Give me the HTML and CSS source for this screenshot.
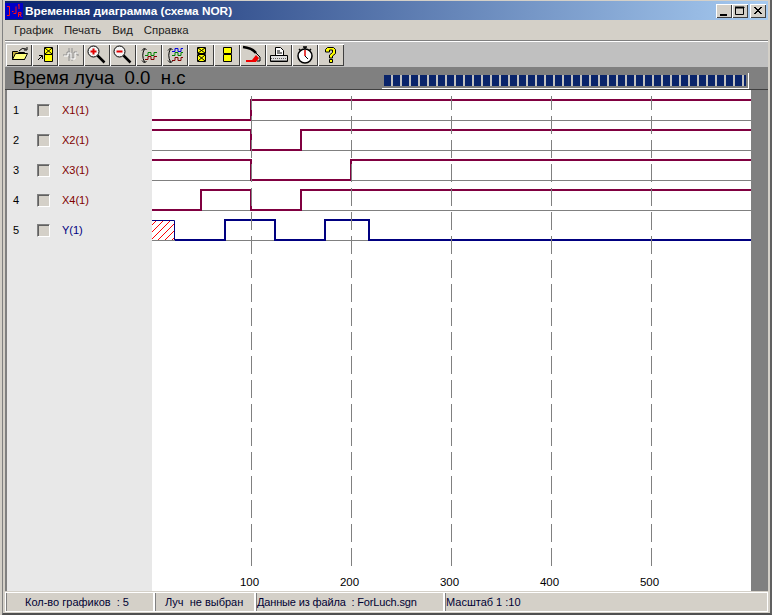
FILE: index.html
```html
<!DOCTYPE html>
<html lang="ru">
<head>
  <meta charset="UTF-8" />
  <title>Временная диаграмма (схема NOR)</title>
  <link rel="stylesheet" href="styles.css">
</head>
<body>
  <div class="window">
    <div class="titlebar">
      <svg class="app-icon" width="18" height="16" viewBox="0 0 18 16">
        <rect width="18" height="16" fill="#0000c8"/>
        <path d="M2 3.5h2.5v9H2M7 8.5h1.5M11 3.5v7H8.5M14 1v5M13 2h1M13.5 14v-4.5h2.5v2h-2.5M15 12l1.5 2" fill="none" stroke="#ff1010" stroke-width="1"/>
      </svg>
      <span class="title-text">Временная диаграмма (схема NOR)</span>
      <div class="win-buttons">
        <button class="win-btn"><svg width="16" height="14" viewBox="0 0 16 14"><path d="M4 11h7" stroke="#000" stroke-width="2"/></svg></button>
        <button class="win-btn"><svg width="16" height="14" viewBox="0 0 16 14"><path d="M3.5 3.5h8v7h-8zM3 3h9v1H3" fill="none" stroke="#000"/></svg></button>
        <button class="win-btn win-close"><svg width="16" height="14" viewBox="0 0 16 14"><path d="M4 3l7 7M5 3l7 7M11 3l-7 7M12 3l-7 7" stroke="#000"/></svg></button>
      </div>
    </div>

    <div class="menubar">
      <span>График</span>
      <span>Печать</span>
      <span>Вид</span>
      <span>Справка</span>
    </div>

    <div class="toolbar">
      <button class="tool"><svg width="20" height="20" viewBox="0 0 20 20"><path d="M3.5 6.5h5l1 1h6v7h-12z" fill="#c8b040" stroke="#000"/><path d="M3.5 14.5l3-6h12l-3 6z" fill="#ffff80" stroke="#000"/><path d="M10 6q3-4 7-2M18 2v3h-3" fill="none" stroke="#000"/></svg></button>
      <button class="tool"><svg width="20" height="20" viewBox="0 0 20 20"><path d="M9.5 2.5h8v7h-8z" fill="#ffff00" stroke="#000"/><path d="M10 3l7 6M17 3l-7 6" stroke="#000"/><path d="M9.5 9.5h8v7h-8z" fill="#ffff00" stroke="#000"/><path d="M3 15l4-4M4 10.5h3.5V14" fill="none" stroke="#000"/></svg></button>
      <button class="tool"><svg width="20" height="20" viewBox="0 0 20 20"><path d="M2 10h4V7h3v6h4V7h3v3h2M8 3v13M11 3v13" fill="none" stroke="#909090"/><path d="M3 11h4V8h3v6h4V8h3" fill="none" stroke="#fff"/></svg></button>
      <button class="tool"><svg width="20" height="20" viewBox="0 0 20 20"><circle cx="6.5" cy="6.5" r="5.5" fill="#f4f4f4" stroke="#000"/><path d="M3.5 6.5h6M6.5 3.5v6" stroke="#e00000" stroke-width="2"/><path d="M10.5 10.5l7 7" stroke="#000" stroke-width="2.5"/></svg></button>
      <button class="tool"><svg width="20" height="20" viewBox="0 0 20 20"><circle cx="6.5" cy="6.5" r="5.5" fill="#f4f4f4" stroke="#000"/><path d="M3.5 6.5h6" stroke="#e00000" stroke-width="2"/><path d="M10.5 10.5l7 7" stroke="#000" stroke-width="2.5"/></svg></button>
      <button class="tool"><svg width="20" height="20" viewBox="0 0 20 20"><path d="M6 10.5h3v-3h3v3h3v-3h3" fill="none" stroke="#008000"/><path d="M6 14.5h3v-3h3v3h3v-3h3" fill="none" stroke="#800000"/><path d="M5.5 4Q2 10 5.5 17M3 5.5L5.5 3l2 2M3 15.5L5.5 18l2-2" fill="none" stroke="#000"/></svg></button>
      <button class="tool"><svg width="20" height="20" viewBox="0 0 20 20"><path d="M7 6.5h3v-3h3v3h3v-3h2" fill="none" stroke="#0000e0"/><path d="M7 10.5h3v-3h3v3h3v-3h2" fill="none" stroke="#008000"/><path d="M7 15.5h3v-3h3v3h3v-3h2" fill="none" stroke="#800000"/><path d="M5.5 4Q2 10 5.5 17M3 5.5L5.5 3l2 2M3 15.5L5.5 18l2-2" fill="none" stroke="#000"/></svg></button>
      <button class="tool"><svg width="20" height="20" viewBox="0 0 20 20"><path d="M6.5 2.5h8v6h-8zM6.5 9.5h8v7h-8z" fill="#ffff00" stroke="#000"/><path d="M7 3l7 5M14 3l-7 5M7 10l7 6M14 10l-7 6" stroke="#000"/></svg></button>
      <button class="tool"><svg width="20" height="20" viewBox="0 0 20 20"><path d="M6.5 2.5h8v6h-8zM6.5 9.5h8v7h-8z" fill="#ffff00" stroke="#000"/></svg></button>
      <button class="tool"><svg width="22" height="20" viewBox="0 0 22 20"><path d="M1 2q9 1 13 6" fill="none" stroke="#000" stroke-width="2.5"/><path d="M14 8l4 4v4h-3" fill="none" stroke="#000"/><path d="M14 10l3 3-3 4H4v-2h6z" fill="#f00000"/></svg></button>
      <button class="tool"><svg width="20" height="20" viewBox="0 0 20 20"><path d="M6.5 2.5h5l3 3v5h-8z" fill="#fff" stroke="#000"/><path d="M8 6h3M8 8h5" stroke="#000"/><path d="M1.5 10.5h17v6h-17z" fill="#e0e0e0" stroke="#000"/><path d="M2 13.5h16" stroke="#606060" stroke-dasharray="1 1"/><path d="M2 15.5h16" stroke="#808080"/></svg></button>
      <button class="tool"><svg width="20" height="20" viewBox="0 0 20 20"><circle cx="10" cy="11" r="7" fill="#fff" stroke="#000" stroke-width="1.5"/><path d="M8 2h4M10 2v2M4 4l2 2M16 4l-2 2" stroke="#000" stroke-width="1.5"/><path d="M10 5v6" stroke="#e00000" stroke-width="1.5"/><path d="M10 11l3 3" stroke="#000"/></svg></button>
      <button class="tool"><svg width="20" height="20" viewBox="0 0 20 20"><path d="M4.5 7V4.5l2-2h6l2 2v4l-3 2.5v2h-3v-3l3-2.5V5h-3v2z" fill="#ffff00" stroke="#000"/><path d="M8.5 14.5h3v3h-3z" fill="#ffff00" stroke="#000"/></svg></button>
    </div>

    <div class="time-bar">
      <span class="time-label">Время луча&nbsp; 0.0&nbsp; н.с</span>
      <div class="progress"></div>
    </div>

    <div class="chart-area">
      <ul class="signals">
        <li class="signal"><span class="num">1</span><span class="check"></span><span class="name">X1(1)</span></li>
        <li class="signal"><span class="num">2</span><span class="check"></span><span class="name">X2(1)</span></li>
        <li class="signal"><span class="num">3</span><span class="check"></span><span class="name">X3(1)</span></li>
        <li class="signal"><span class="num">4</span><span class="check"></span><span class="name">X4(1)</span></li>
        <li class="signal output"><span class="num">5</span><span class="check"></span><span class="name">Y(1)</span></li>
      </ul>

      <svg class="plot" width="599" height="501" viewBox="152 90 599 501">
        <path class="base" d="M152 120.5H751M152 150.5H751M152 180.5H751M152 210.5H751M152 240.5H751"/>
        <path class="wave" d="M152 120H251V100H751"/>
        <path class="wave" d="M152 130H251V150H301V130H751"/>
        <path class="wave" d="M152 160H251V180H351V160H751"/>
        <path class="wave" d="M152 210H201V190H251V210H301V190H751"/>
        <path class="hatch" d="M152 225L156 221M152 232L163 221M152 239L170 221M158 240L174 224M165 240L174 231M172 240L174 238"/>
        <path class="hatch-edge" d="M152 220.5H174.5V240"/>
        <path class="wave wave-out" d="M175 240H225V220H275V240H325V220H369V240H751"/>
        <path class="grid" d="M251.5 96V566M351.5 96V566M451.5 96V566M551.5 96V566M651.5 96V566"/>
        <text x="249.5" y="586">100</text>
        <text x="349.5" y="586">200</text>
        <text x="449.5" y="586">300</text>
        <text x="549.5" y="586">400</text>
        <text x="649.5" y="586">500</text>
      </svg>
      <div class="side-strip"></div>
    </div>

    <div class="statusbar">
      <div class="pane pane-count">Кол-во графиков&nbsp; : 5</div>
      <div class="pane pane-ray">Луч&nbsp; не выбран</div>
      <div class="pane pane-file">Данные из файла&nbsp; : ForLuch.sgn</div>
      <div class="pane pane-scale">Масштаб 1 :10</div>
    </div>
  </div>
</body>
</html>
```

FILE: styles.css
```css
* {
  margin: 0;
  padding: 0;
  box-sizing: border-box;
}

html, body {
  height: 100%;
  overflow: hidden;
}

body {
  font-family: "Liberation Sans", Arial, sans-serif;
  background: #d4d0c8;
  color: #000;
}

.window {
  width: 770px;
  height: 615px;
  margin-left: 2px;
  padding: 1px 2px 1px 2px;
  background: #d4d0c8;
  border-left: 1px solid #808080;
  border-right: 2px solid #606060;
  border-bottom: 2px solid #505050;
  display: flex;
  flex-direction: column;
}

/* Title bar */
.titlebar {
  height: 19px;
  flex: none;
  display: flex;
  align-items: center;
  background: linear-gradient(to right, #0a246a, #a6caf0);
  color: #fff;
  font-size: 11.8px;
  font-weight: bold;
}

.app-icon {
  margin-right: 2px;
}

.win-buttons {
  margin-left: auto;
  display: flex;
  padding: 1px 2px 0 0;
}

.win-btn {
  width: 16px;
  height: 14px;
  display: block;
  border: none;
  background: #d4d0c8;
  box-shadow: inset 1px 1px 0 #fff, inset -1px -1px 0 #404040;
}

.win-close {
  margin-left: 2px;
}

/* Menu */
.menubar {
  height: 21px;
  flex: none;
  display: flex;
  align-items: center;
  gap: 11px;
  padding-left: 9px;
  font-size: 11.4px;
  color: #1c1c1c;
  border-bottom: 1px solid #808080;
}

/* Toolbar */
.toolbar {
  height: 26px;
  flex: none;
  display: flex;
  padding: 2px 0 0 1px;
  background: #c0c0c0;
  border-top: 1px solid #fff;
}

.tool {
  width: 26px;
  height: 22px;
  flex: none;
  display: flex;
  align-items: center;
  justify-content: center;
  border: none;
  background: #d4d0c8;
  box-shadow: inset 1px 1px 0 #fff, inset -1px -1px 0 #404040;
}

/* Time header */
.time-bar {
  height: 23px;
  flex: none;
  display: flex;
  align-items: center;
  justify-content: space-between;
  background: #808080;
  border-bottom: 1px solid #404040;
  padding-left: 8px;
}

.time-label {
  font-size: 18.6px;
  color: #000;
}

.progress {
  width: 367px;
  height: 16px;
  align-self: flex-end;
  margin-right: 19px;
  padding: 2px;
  border-right: 1px solid #fff;
  border-bottom: 1px solid #fff;
  background-color: #c0c0c0;
  background-image: repeating-linear-gradient(to right, #0a246a 0, #0a246a 7px, #c0c0c0 7px, #c0c0c0 9px);
  background-origin: content-box;
  background-clip: content-box;
}

/* Chart */
.chart-area {
  flex: 1;
  display: flex;
  min-height: 0;
  background: #fff;
}

.signals {
  width: 147px;
  flex: none;
  padding: 5px 0 0 6px;
  list-style: none;
  background: #e8e8e8;
  border-left: 2px solid #808080;
}

.signal {
  height: 30px;
  display: flex;
  align-items: center;
  font-size: 11px;
  color: #000;
}

.num {
  width: 24px;
}

.check {
  width: 13px;
  height: 13px;
  margin-right: 12px;
  background: #d4d0c8;
  border-top: 1px solid #808080;
  border-left: 1px solid #808080;
  border-right: 1px solid #fff;
  border-bottom: 1px solid #fff;
  box-shadow: inset 1px 1px 0 #606060;
}

.name {
  color: #800000;
}

.output .name {
  color: #000080;
}

.plot {
  display: block;
  flex: none;
}

.plot text {
  font-family: "Liberation Sans", Arial, sans-serif;
  font-size: 11.5px;
  text-anchor: middle;
  fill: #000;
}

.base {
  fill: none;
  stroke: #808080;
}

.grid {
  fill: none;
  stroke: #808080;
  stroke-dasharray: 18 6;
  stroke-dashoffset: 4;
}

.wave {
  fill: none;
  stroke: #800040;
  stroke-width: 2;
}

.wave-out {
  stroke: #000080;
}

.hatch {
  fill: none;
  stroke: #ff0000;
  shape-rendering: crispEdges;
}

.hatch-edge {
  fill: none;
  stroke: #000080;
}

.side-strip {
  flex: 1;
  background: #808080;
}

/* Status bar */
.statusbar {
  height: 21px;
  flex: none;
  display: flex;
  border-top: 1px solid #d4d0c8;
  font-size: 11px;
}

.pane {
  height: 20px;
  display: flex;
  align-items: center;
  background: #d4d0c8;
  color: #000033;
  border: 1px solid #fff;
  box-shadow: inset 1px 0 0 #808080;
}

.pane-count {
  width: 149px;
  padding-left: 19px;
}

.pane-ray {
  width: 101px;
  padding-left: 10px;
}

.pane-file {
  width: 189px;
  padding-left: 1px;
  letter-spacing: -0.15px;
}

.pane-scale {
  flex: 1;
  padding-left: 1px;
}
```
